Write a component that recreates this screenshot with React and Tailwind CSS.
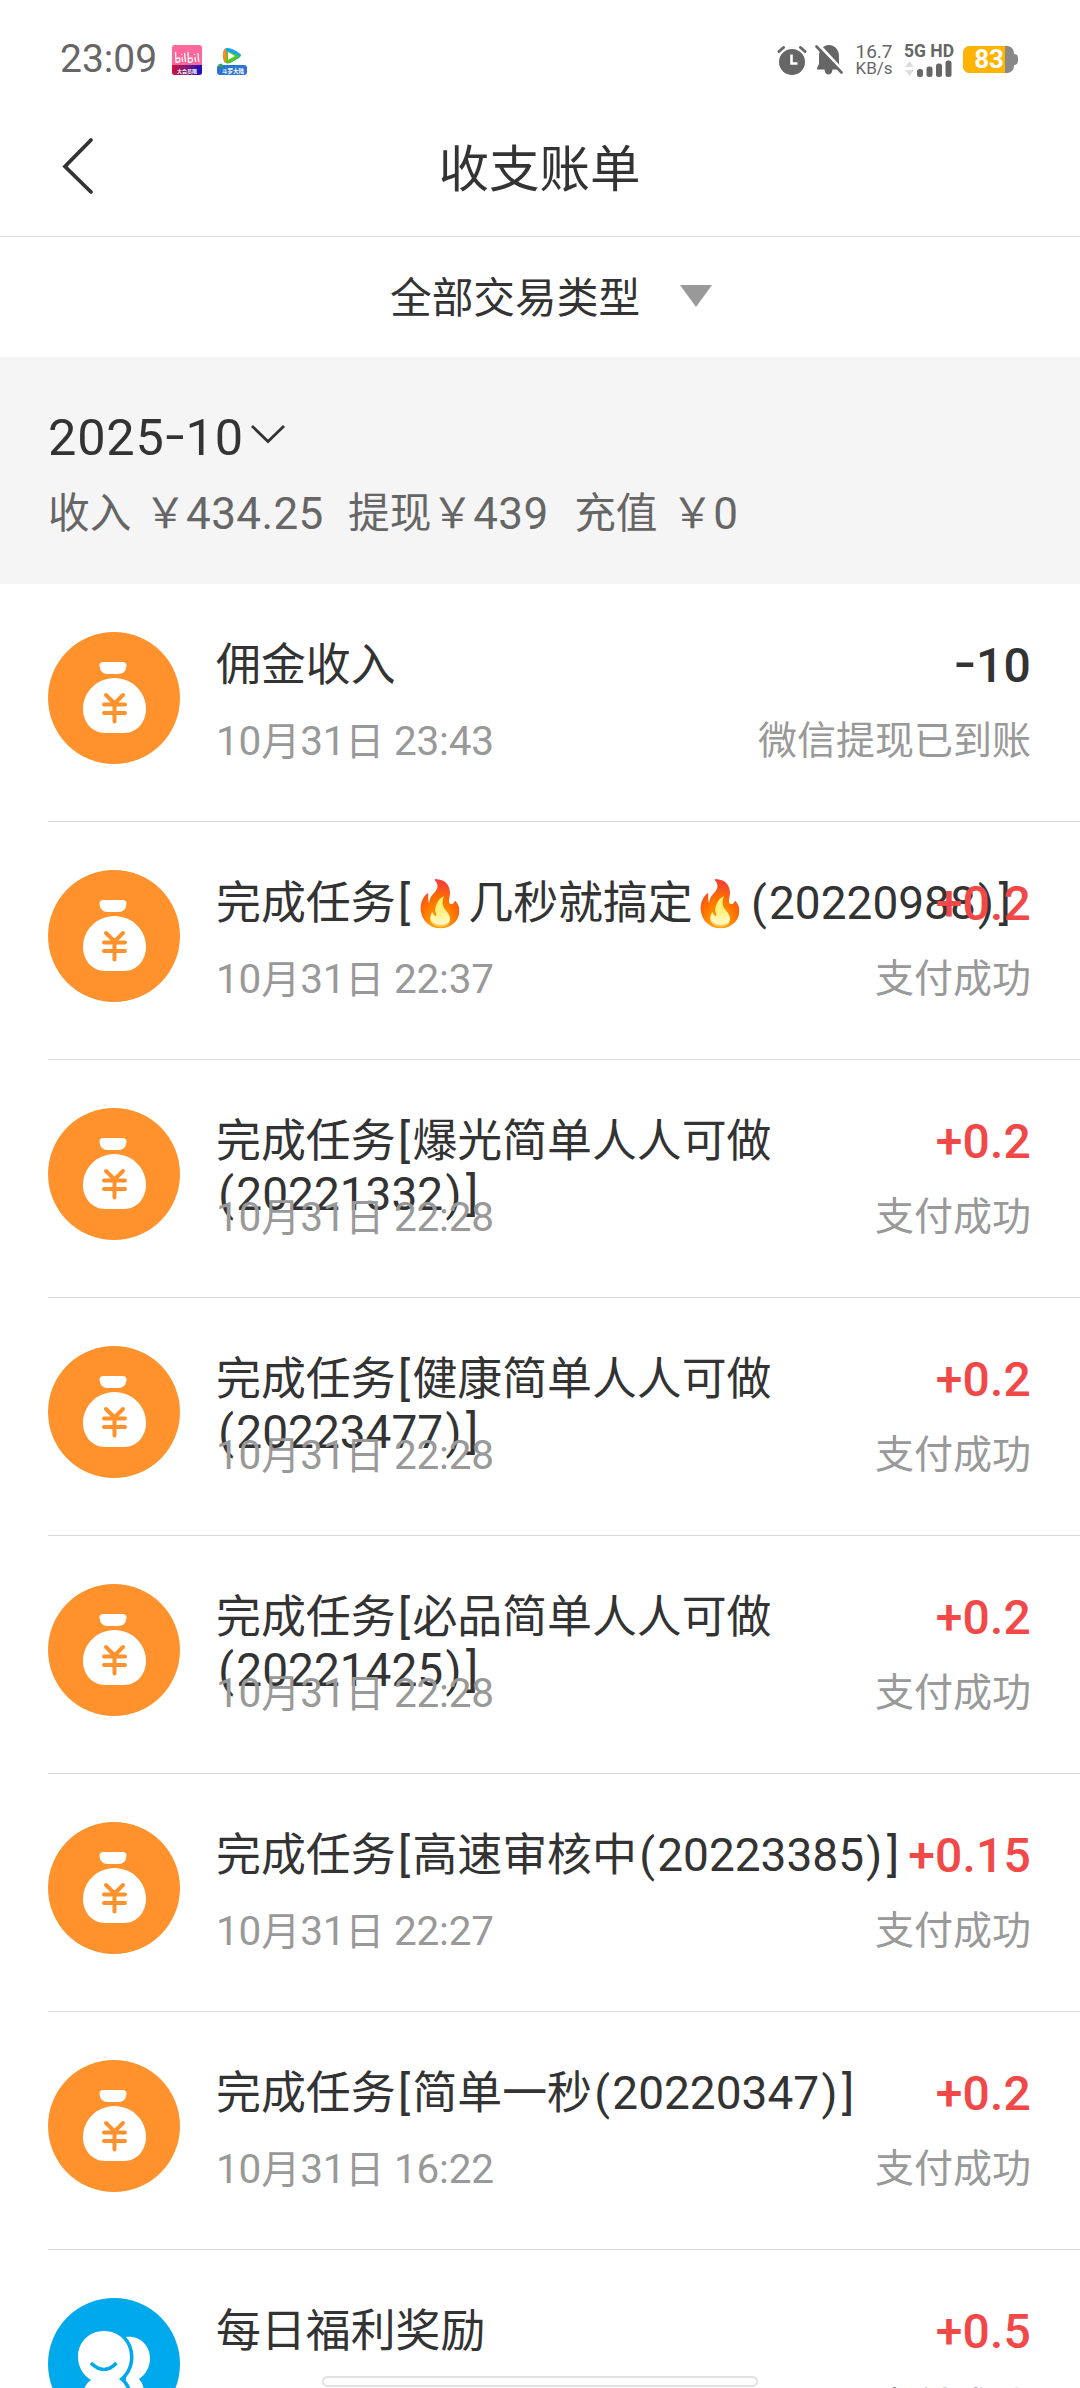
import { Fragment } from 'react';

const transactions = [
  { title: '佣金收入', time: '10月31日 23:43', amount: '-10', status: '微信提现已到账', icon: 'money' },
  { title: '完成任务[🔥几秒就搞定🔥(20220988)]', time: '10月31日 22:37', amount: '+0.2', status: '支付成功', icon: 'money' },
  { title: '完成任务[爆光简单人人可做(20221332)]', time: '10月31日 22:28', amount: '+0.2', status: '支付成功', icon: 'money' },
  { title: '完成任务[健康简单人人可做(20223477)]', time: '10月31日 22:28', amount: '+0.2', status: '支付成功', icon: 'money' },
  { title: '完成任务[必品简单人人可做(20221425)]', time: '10月31日 22:28', amount: '+0.2', status: '支付成功', icon: 'money' },
  { title: '完成任务[高速审核中(20223385)]', time: '10月31日 22:27', amount: '+0.15', status: '支付成功', icon: 'money' },
  { title: '完成任务[简单一秒(20220347)]', time: '10月31日 16:22', amount: '+0.2', status: '支付成功', icon: 'money' },
  { title: '每日福利奖励', time: '10月31日 16:20', amount: '+0.5', status: '支付成功', icon: 'friends' },
];

// Latin digits run a little small next to the CJK glyphs, so bump them up.
// Brackets and the hyphen also get some extra room.
function Mixed({ text, className }) {
  return text.split(/([0-9:.+]+|[()[\]]|-)/).map((part, i) => {
    if (i % 2 === 0) return <Fragment key={i}>{part}</Fragment>;
    if (part === '-') return <span key={i} className="inline-block mx-[3px] -translate-y-[3px] scale-x-[1.350]">-</span>;
    if ('()[]'.includes(part)) return <span key={i} className={`${className} px-[2.300px]`}>{part}</span>;
    return <span key={i} className={className}>{part}</span>;
  });
}

function MoneyIcon() {
  return (
    <svg viewBox="0 0 132 132" className="w-[132px] h-[132px]">
      <circle cx="66" cy="66" r="66" fill="#ff922d" />
      <path d="M56 30h18q5 0 4.500 4q-1 8-8 8h-11q-7 0-8-8q-.5-4 4.500-4z" fill="#fff" />
      <path d="M66.500 46C84 46 98 60 98 77C98 90 89 101 76 101H57C44 101 35 90 35 77C35 60 49 46 66.500 46z" fill="#fff" />
      <path d="M58 63l8.500 8.500L75 63M56 72.500h21M56 81h21M66.500 72v17.500" fill="none" stroke="#ff922d" strokeWidth="4" strokeLinecap="round" />
    </svg>
  );
}

function FriendsIcon() {
  return (
    <svg viewBox="0 0 132 132" className="w-[132px] h-[132px]">
      <circle cx="66" cy="66" r="66" fill="#00a8ec" />
      <path d="M78 39C92 37 102 48 102 60C102 70 97 77 91 81Q95 85 96 92V100H78V40z" fill="#fff" />
      <path d="M56 33C71 33 82 44 82 59C82 69 77 77 71 81Q78 86 80 94V100H34Q35 87 43 82C35 77 30 69 30 59C30 44 41 33 56 33z" fill="#fff" stroke="#00a8ec" strokeWidth="7" paintOrder="stroke" />
      <path d="M43 65Q56 78 68.500 65" fill="none" stroke="#00a8ec" strokeWidth="3.500" />
    </svg>
  );
}

function BilibiliIcon() {
  return (
    <svg viewBox="0 0 30 30" className="w-[30px] h-[30px]">
      <defs>
        <linearGradient id="bili" x1="0" x2="1">
          <stop offset="0" stopColor="#d0103c" />
          <stop offset="0.5" stopColor="#7a1a78" />
          <stop offset="1" stopColor="#1010c8" />
        </linearGradient>
      </defs>
      <rect width="30" height="30" rx="3" fill="#ff6699" />
      <path d="M0 20h30v7q0 3-3 3H3q-3 0-3-3z" fill="url(#bili)" />
      <path d="M3.500 7l.5 10q4 1 4-2t-3.500-1.500M10 12l.7 5M9.700 9v1M12.500 8l1 9M16 7l.5 10q4 1 4-2t-3.500-1.500M23 12l.7 5M22.500 9v1M26 8l.7 9" fill="none" stroke="#fff" strokeWidth="1.300" />
      <text x="15" y="27.500" textAnchor="middle" fontSize="5" fontWeight="700" fill="#fff">大会员限</text>
    </svg>
  );
}

function TencentVideoIcon() {
  return (
    <svg viewBox="0 0 30 28" className="w-[30px] h-[28px]">
      <path d="M10 1Q6 1 6 8t3 8Q12 17 15 15L22 11Q26 8 22 6Q15 1 10 1z" fill="#12a5f4" />
      <path d="M9 1.500Q5.500 3 6 9t3 7Q12 17 16 14L10 9z" fill="#ff8a16" />
      <path d="M10 4l13 5-8 6q-4 2-6 .5z" fill="#4fc81e" />
      <path d="M11 5l7 4-7 4z" fill="#fff" />
      <path d="M3 18h24q3 0 3 3v4q0 3-3 3H3q-3 0-3-3v-4q0-3 3-3z" fill="#2c74d2" />
      <path d="M4 16l1 1.500 2 .5-1.500 1.500V21L4 20l-2 1 .5-2L1 17.500 3.500 17z" fill="#2ea64b" />
      <text x="16" y="25.500" textAnchor="middle" fontSize="5.500" fontWeight="700" fill="#fff">斗罗大陆</text>
    </svg>
  );
}

function AlarmIcon() {
  return (
    <svg viewBox="0 0 30 30" className="w-[30px] h-[30px]">
      <circle cx="15" cy="17" r="13" fill="#666" />
      <path d="M2 6.500L6.500 2.500M28 6.500L23.500 2.500" stroke="#666" strokeWidth="3" strokeLinecap="round" />
      <path d="M14.500 9.500v9h6" fill="none" stroke="#fff" strokeWidth="2.600" />
    </svg>
  );
}

function MutedBellIcon() {
  return (
    <svg viewBox="0 0 28 32" className="w-[28px] h-[32px]">
      <path d="M14 1C20 1 24 6 24 12V20L26 24V25.500H17.500Q17 30.500 13.500 30.500T9.500 25.500H2V24L4 20V12C4 6 8 1 14 1z" fill="#666" />
      <path d="M3 0L28 27" stroke="#fff" strokeWidth="3" />
      <path d="M1.500 2.500L26.500 28.500" stroke="#666" strokeWidth="2.600" strokeLinecap="round" />
    </svg>
  );
}

function SignalIcon() {
  return (
    <svg viewBox="0 0 48 17" className="w-[48px] h-[17px]">
      <path d="M5.500 1l4.500 6H1z M5.500 16l4.500-6H1z" fill="#ddd" />
      <rect x="13" y="9" width="6" height="8" rx="2.500" fill="#666" />
      <rect x="22.500" y="6.500" width="6" height="10.500" rx="2.500" fill="#666" />
      <rect x="32" y="3.500" width="6" height="13.500" rx="2.500" fill="#666" />
      <rect x="41.500" y="0.500" width="6" height="16.500" rx="2.500" fill="#666" />
    </svg>
  );
}

function StatusBar() {
  return (
    <div className="flex items-center h-[100px] shrink-0 pt-[19px] px-[60px] text-[#666]">
      <span className="w-[112px] text-[39px] leading-none">23:09</span>
      <BilibiliIcon />
      <div className="ml-[15px] mt-[3px]"><TencentVideoIcon /></div>
      <div className="ml-auto mr-[2px] flex items-center">
        <AlarmIcon />
        <div className="ml-[8px]"><MutedBellIcon /></div>
        <div className="ml-[13px] w-[36px] flex flex-col items-center text-[19px] leading-[17px]">
          <span>16.7</span>
          <span className="text-[17px]">KB/s</span>
        </div>
        <div className="ml-[12px] mr-[2px] w-[50px] flex flex-col">
          <span className="text-[17.500px] leading-[17px] font-bold whitespace-nowrap">5G HD</span>
          <SignalIcon />
        </div>
        <div className="ml-[7px] flex items-center">
          <div className="w-[51px] h-[27px] rounded-[7px] bg-[#888] overflow-hidden">
            <div className="w-[42px] h-full bg-[#ffb400] text-white text-[26px] leading-[27px] font-bold text-right pr-[1px]">83</div>
          </div>
          <div className="w-[4px] h-[11px] rounded-r-[4px] bg-[#888]"></div>
        </div>
      </div>
    </div>
  );
}

function TransactionRow({ item }) {
  return (
    <div className="ml-12 h-[238px] shrink-0 flex border-b border-[#d9d9d9]">
      <div className="mt-12 shrink-0">
        {item.icon === 'money' ? <MoneyIcon /> : <FriendsIcon />}
      </div>
      <div className="ml-9 mr-[49px] grow grid grid-cols-1 grid-rows-[76px_53px] content-start pt-[55px] leading-[53px]">
        <div className="col-start-1 row-start-1 w-[806px] h-[76px] text-[44.900px] text-[#333]">
          <Mixed text={item.title} className="text-[46px]" />
        </div>
        <div className={`col-start-1 row-start-1 justify-self-end text-[48px] tracking-[0.2px] font-medium ${item.amount.startsWith('-') ? 'text-[#333]' : 'text-[#f24848]'}`}>
          <Mixed text={item.amount} className="" />
        </div>
        <div className="row-start-2 flex justify-between text-[39px] text-[#999]">
          <div><Mixed text={item.time} className="text-[40.500px] tracking-[-0.2px]" /></div>
          <div>{item.status}</div>
        </div>
      </div>
    </div>
  );
}

export default function App() {
  return (
    <div className="relative w-[1080px] h-[2388px] overflow-hidden bg-white flex flex-col font-[Roboto,'Noto_Sans_CJK_SC','Noto_Color_Emoji',sans-serif]">
      <StatusBar />

      {/* Header */}
      <div className="h-[137px] shrink-0 flex items-center px-[60px] border-b border-[#d9d9d9]">
        <svg viewBox="0 0 36 60" className="w-[36px] h-[60px] mb-[4px]">
          <path d="M31 4L5 30.500L31 56" fill="none" stroke="#333" strokeWidth="3.800" strokeLinecap="round" />
        </svg>
        <h1 className="grow text-center pt-[3px] pr-[37px] text-[50.500px] text-[#333]">收支账单</h1>
      </div>

      {/* Type filter */}
      <div className="h-[120px] shrink-0 flex items-center pl-[390px] text-[41.700px] text-[#333]">
        <span className="pt-[5px]">全部交易类型</span>
        <svg viewBox="0 0 32 22" className="ml-[40px] mb-[2px] w-[32px] h-[22px]">
          <path d="M0 0h32L16 22z" fill="#999" />
        </svg>
      </div>

      {/* Month summary */}
      <div className="h-[227px] shrink-0 bg-[#f5f5f5] pl-12 pt-[51px]">
        <div className="flex items-center h-[60px] text-[50.500px] text-[#333]">
          <span className="w-[203px] tracking-[0.8px] whitespace-nowrap"><Mixed text="2025-10" className="" /></span>
          <svg viewBox="0 0 34 20" className="w-[34px] h-[20px] mb-[8px]">
            <path d="M1 2L17 17.500L33 2" fill="none" stroke="#333" strokeWidth="2.800" />
          </svg>
        </div>
        <div className="flex items-center h-[60px] mt-[16px] text-[41.700px] text-[#666]">
          <span>收入</span>
          <span className="ml-[13px]">￥</span>
          <span className="w-[162px] text-[44px] tracking-[0.4px]">434.25</span>
          <span>提现￥</span>
          <span className="w-[101px] text-[44px] tracking-[0.4px]">439</span>
          <span>充值</span>
          <span className="ml-[14px]">￥</span>
          <span className="text-[44px]">0</span>
        </div>
      </div>

      {/* Transactions */}
      {transactions.map((item, i) => (
        <TransactionRow key={i} item={item} />
      ))}

      {/* Gesture bar */}
      <div className="absolute left-[322px] top-[2376px] w-[436px] h-[11px] rounded-full bg-white border-2 border-[#e2e2e2]"></div>
    </div>
  );
}
